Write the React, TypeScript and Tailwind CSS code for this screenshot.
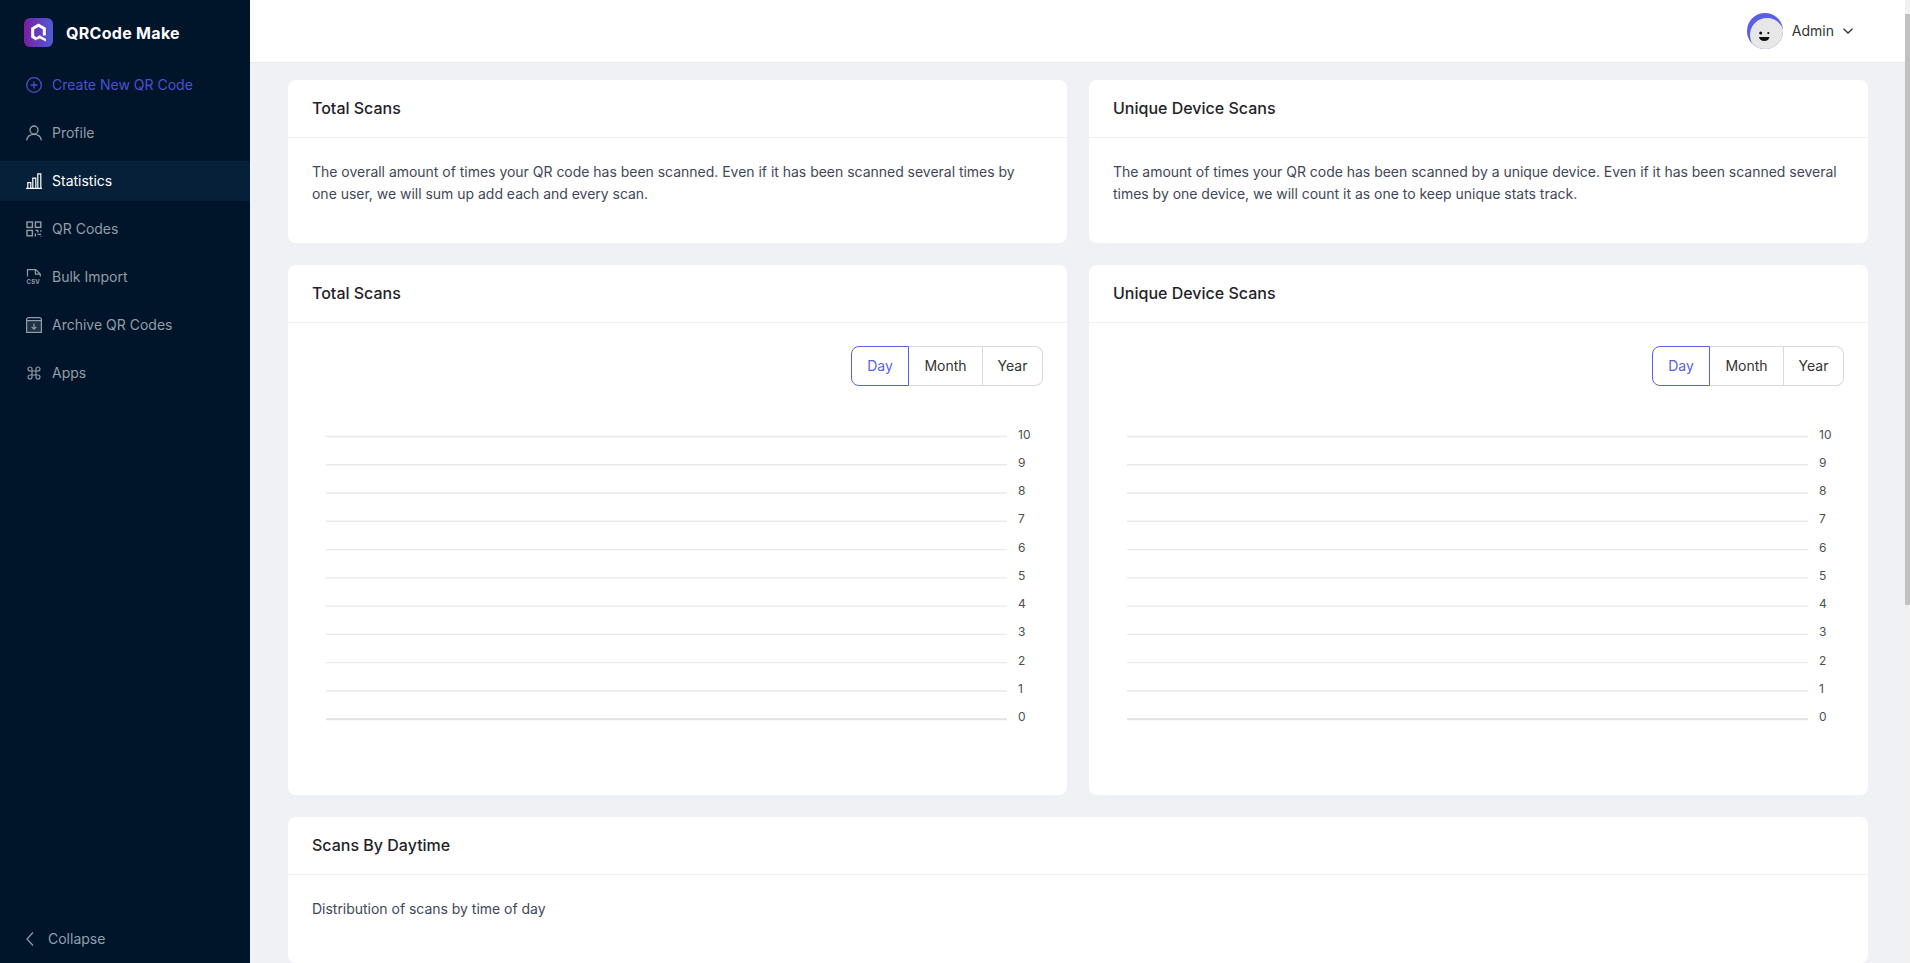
import { ReactNode } from "react";
import { Command } from "lucide-react";

const PlusIcon = () => (
  <svg width="16" height="16" viewBox="0 0 16 16" fill="none" stroke="currentColor" strokeWidth="1.3">
    <circle cx="8" cy="8" r="7.300" />
    <path d="M8 4.600v6.800M4.600 8h6.800" />
  </svg>
);

const UserIcon = () => (
  <svg width="16" height="16" viewBox="0 0 16 16" fill="none" stroke="currentColor" strokeWidth="1.3">
    <circle cx="8" cy="5" r="4" />
    <path d="M.6 15.400C1.200 11.600 4.200 9.300 8 9.300s6.800 2.300 7.400 6.100" />
  </svg>
);

const StatsIcon = () => (
  <svg width="16" height="16" viewBox="0 0 16 16" fill="none" stroke="currentColor" strokeWidth="1.2">
    <path d="M0 15.400h16" />
    <path d="M1.800 15V9.600h3V15M6.800 15V5.200h3V15M11.800 15V.8h3V15" />
  </svg>
);

const QrIcon = () => (
  <svg width="16" height="16" viewBox="0 0 16 16" fill="none" stroke="currentColor" strokeWidth="1.4">
    <rect x="1" y="1" width="5.400" height="5.400" />
    <rect x="9.400" y="1" width="5.400" height="5.400" />
    <rect x="1" y="9.400" width="5.400" height="5.400" />
    <path d="M9.400 9.400h2.400v2.200M14.800 9.200v1.600M9.400 12.400v3M11.600 13.400h3.400M12.600 15.400h.1M14.600 15.400h.8" />
  </svg>
);

const CsvIcon = () => (
  <svg width="16" height="16" viewBox="0 0 16 16" fill="none">
    <path d="M1.500 7.400V.6h8.200l4.600 4.400v2.400M9.400.6v4.600h4.900" stroke="currentColor" strokeWidth="1.200" />
    <text x=".4" y="15.400" fontSize="6" fontWeight="700" letterSpacing=".3" fill="currentColor" fontFamily="Inter, sans-serif">
      CSV
    </text>
  </svg>
);

const ArchiveIcon = () => (
  <svg width="16" height="16" viewBox="0 0 16 16" fill="none" stroke="currentColor" strokeWidth="1.200">
    <rect x=".6" y="3.600" width="14.800" height="11.800" fill="currentColor" fillOpacity=".22" />
    <path d="M2 .6h12M8 6.400v5.600M5.600 9.800 8 12.200l2.400-2.400" />
    <path d="M.6 3.600V2L2 .6M15.400 3.600V2L14 .6" />
  </svg>
);

const Logo = () => (
  <svg width="29" height="29" viewBox="0 0 29 29" className="shrink-0">
    <defs>
      <linearGradient id="logoGrad" x1="0" y1="0" x2="1" y2="0">
        <stop offset="0" stopColor="#7a1ea1" />
        <stop offset="1" stopColor="#4f5cd6" />
      </linearGradient>
    </defs>
    <rect width="29" height="29" rx="6" fill="url(#logoGrad)" />
    <path d="M12.800 21.200 8.700 18.600v-8.100l5.800-3.300 5.800 3.300v7" fill="none" stroke="#fff" strokeWidth="3" />
    <path d="M12.600 19.200 15.600 17.200l6.400 3.800v2.400l-3-1.400-3.400-1.600-2.200 1.400z" fill="#fff" />
  </svg>
);

const Avatar = () => (
  <svg width="36" height="36" viewBox="0 0 36 36" className="shrink-0">
    <defs>
      <clipPath id="avatarClip">
        <circle cx="18" cy="18" r="18" />
      </clipPath>
    </defs>
    <g clipPath="url(#avatarClip)">
      <rect width="36" height="36" fill="#5b5fe3" />
      <circle cx="20" cy="22" r="17" fill="#e7e7e7" />
    </g>
    <circle cx="13.700" cy="20" r="1.500" fill="#111" />
    <circle cx="21.300" cy="20" r="1.100" fill="#111" />
    <path d="M12 24h10.500c-.4 2.500-2.400 4-5.200 4S12.400 26.500 12 24z" fill="#111" />
  </svg>
);

const navItems: { label: string; icon: ReactNode; active?: boolean; create?: boolean }[] = [
  { label: "Create New QR Code", icon: <PlusIcon />, create: true },
  { label: "Profile", icon: <UserIcon /> },
  { label: "Statistics", icon: <StatsIcon />, active: true },
  { label: "QR Codes", icon: <QrIcon /> },
  { label: "Bulk Import", icon: <CsvIcon /> },
  { label: "Archive QR Codes", icon: <ArchiveIcon /> },
  { label: "Apps", icon: <Command size={16} strokeWidth={1.7} /> },
];

const Sidebar = () => (
  <aside className="w-[250px] shrink-0 h-full bg-[#001529] flex flex-col">
    <div className="h-[65px] shrink-0 flex items-center gap-[13px] pl-[24px]">
      <Logo />
      <span className="text-white text-base font-bold tracking-[0.3px]">QRCode Make</span>
    </div>
    <nav className="flex flex-col gap-2">
      {navItems.map((item) => (
        <div
          key={item.label}
          className={`h-10 flex items-center gap-[10px] pl-[26px] text-sm ${
            item.active
              ? "bg-[#062039] text-white"
              : item.create
              ? "text-[#4a52d1]"
              : "text-[#939da8]"
          }`}
        >
          <span className="shrink-0 w-4 h-4">{item.icon}</span>
          {item.label}
        </div>
      ))}
    </nav>
    <div className="mt-auto h-12 flex items-center gap-[14px] pl-[26px] text-sm text-[#8da0b3]">
      <svg width="8" height="16" viewBox="0 0 8 16" fill="none" stroke="currentColor" strokeWidth="1.200" className="shrink-0">
        <path d="M7 1.500 1 8l6 6.500" />
      </svg>
      Collapse
    </div>
  </aside>
);

const Header = () => (
  <header className="h-[63px] shrink-0 bg-white border-b border-[#e9eaee] flex items-center justify-end pr-[52px]">
    <Avatar />
    <span className="ml-[9px] text-sm text-[#333]">Admin</span>
    <svg width="10" height="6" viewBox="0 0 10 6" fill="none" stroke="#333" strokeWidth="1.300" className="ml-[9px] shrink-0">
      <path d="M.5.7 5 5l4.500-4.300" />
    </svg>
  </header>
);

const Card = ({ title, children, className = "" }: { title: string; children: ReactNode; className?: string }) => (
  <section className={`bg-white rounded-lg flex flex-col ${className}`}>
    <div className="h-[58px] shrink-0 flex items-center px-6 pb-[2px] border-b border-[#f0f0f0] text-base font-medium text-[#1f2328]">
      {title}
    </div>
    {children}
  </section>
);

const Blurb = ({ children }: { children: ReactNode }) => (
  <p className="px-6 pt-[23px] text-sm leading-[22px] tracking-[-0.02px] text-[#3f4857]">{children}</p>
);

const RangeTabs = () => (
  <div className="flex justify-end pr-6 pt-[23px] text-sm text-[#333]">
    <div className="h-10 w-[58px] flex items-center justify-center rounded-l-lg border border-[#5b5fe3] text-[#5b5fe3]">
      Day
    </div>
    <div className="h-10 w-[74px] flex items-center justify-center border-y border-r border-[#d9d9d9]">Month</div>
    <div className="h-10 w-[60px] flex items-center justify-center rounded-r-lg border-y border-r border-[#d9d9d9]">
      Year
    </div>
  </div>
);

const ticks = [10, 9, 8, 7, 6, 5, 4, 3, 2, 1, 0];

const Chart = () => (
  <svg width="779" height="340" viewBox="0 0 779 340" className="mt-[10px]">
    {ticks.map((t, i) => {
      const y = 40.500 + i * 28.270;
      return (
        <g key={t}>
          <line x1="38" x2="719" y1={y} y2={y} stroke={t === 0 ? "#e2e2e2" : "#e9e9e9"} strokeWidth={t === 0 ? 2 : 1.400} />
          <text x="730" y={y + 2} fontSize="12" fill="#4b4f56" fontFamily="Inter, sans-serif">
            {t}
          </text>
        </g>
      );
    })}
  </svg>
);

const ChartCard = ({ title }: { title: string }) => (
  <Card title={title} className="h-[530px]">
    <RangeTabs />
    <Chart />
  </Card>
);

export default function App() {
  return (
    <div className="h-[963px] w-[1910px] overflow-hidden flex font-['Inter',sans-serif]">
      <Sidebar />
      <main className="flex-1 min-w-0 h-full flex flex-col bg-[#f0f1f5]">
        <Header />
        <div className="flex-1 min-h-0 pl-[38px] pr-[37px] pt-[17px] flex flex-col gap-[22px]">
          <div className="grid grid-cols-2 gap-[22px]">
            <Card title="Total Scans" className="h-[163px]">
              <Blurb>
                The overall amount of times your QR code has been scanned. Even if it has been scanned several times by
                one user, we will sum up add each and every scan.
              </Blurb>
            </Card>
            <Card title="Unique Device Scans" className="h-[163px]">
              <Blurb>
                The amount of times your QR code has been scanned by a unique device. Even if it has been scanned
                several times by one device, we will count it as one to keep unique stats track.
              </Blurb>
            </Card>
          </div>
          <div className="grid grid-cols-2 gap-[22px]">
            <ChartCard title="Total Scans" />
            <ChartCard title="Unique Device Scans" />
          </div>
          <Card title="Scans By Daytime" className="h-[146px]">
            <Blurb>Distribution of scans by time of day</Blurb>
          </Card>
        </div>
      </main>
      <div className="w-[5px] shrink-0 h-full bg-[#f1f1f1] pt-[14px]">
        <div className="h-[591px] bg-[#c1c1c1]" />
      </div>
    </div>
  );
}
